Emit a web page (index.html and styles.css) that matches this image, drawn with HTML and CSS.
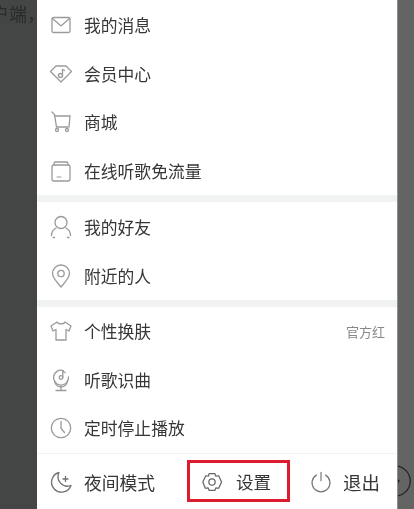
FILE: index.html
```html
<!DOCTYPE html>
<html lang="zh">
<head>
<meta charset="utf-8">
<title>菜单</title>
<link rel="stylesheet" href="styles.css">
</head>
<body>
<div class="screen">
  <div class="left-gutter"><span class="behind-text">户端，</span></div>
  <main class="panel">
    <section class="group group-first">
      <div class="row"><svg class="icon" viewBox="0 0 24 24"><rect x="3" y="4.500" width="18" height="15" rx="1.500"/><path d="M3.500 5.500 12 13l8.500-7.500"/></svg><span>我的消息</span></div>
      <div class="row"><svg class="icon" viewBox="0 0 24 24"><path d="M7 4h10L22.500 9.500 12 20 1.500 9.500z" stroke-linejoin="round"/><path d="M13.500 7.500v6"/><circle cx="11.500" cy="13.500" r="2"/><path d="M13.500 7.500l2 1"/></svg><span>会员中心</span></div>
      <div class="row"><svg class="icon" viewBox="0 0 24 24"><path d="M3 2l2.500 2.500 2 12.500h11.500"/><path d="M5.500 6H21l-1 11"/><circle cx="8" cy="20" r="1.500"/><circle cx="18" cy="20" r="1.500"/></svg><span>商城</span></div>
      <div class="row"><svg class="icon" viewBox="0 0 24 24"><rect x="3" y="6" width="18" height="16" rx="2"/><path d="M5 6V4.500Q5 3 6.500 3h11Q19 3 19 4.500V6"/><path class="fine" d="M8 18h4"/></svg><span>在线听歌免流量</span></div>
    </section>
    <section class="group group-mid">
      <div class="row"><svg class="icon" viewBox="0 0 24 24"><circle cx="12" cy="7.500" r="6"/><path d="M7 13C4 14.500 2.500 17 2.500 20.500"/><path d="M17 13c3 1.500 4.500 4 4.500 7.500"/><path d="M4 22.500h1.500M18.500 22.500H20"/></svg><span>我的好友</span></div>
      <div class="row"><svg class="icon" viewBox="0 0 24 24"><path d="M12 23C7 17.500 3.500 13.500 3.500 9.500a8.500 8.500 0 0 1 17 0C20.500 13.500 17 17.500 12 23z" stroke-linejoin="round"/><circle cx="12" cy="9.500" r="3.200"/></svg><span>附近的人</span></div>
    </section>
    <section class="group group-last">
      <div class="row"><svg class="icon" viewBox="0 0 24 24"><path d="M8 3 2 7l2 5 3-1.500V21h10V10.500l3 1.500 2-5-6-4c-1 2.500-7 2.500-8 0z" stroke-linejoin="round"/></svg><span>个性换肤</span><em class="row-note">官方红</em></div>
      <div class="row"><svg class="icon" viewBox="0 0 24 24"><path d="M14.500 2.500A7.500 7.500 0 1 0 19.500 9"/><path d="M5.500 12.500a6.500 6.500 0 0 0 13 0"/><circle cx="12" cy="9.500" r="1.800"/><path d="M13.800 9.500V3.500l2.500 1"/><path d="M12 19v2.500M7 22.500h10"/></svg><span>听歌识曲</span></div>
      <div class="row"><svg class="icon" viewBox="0 0 24 24"><circle cx="12" cy="12" r="9.700"/><path d="M12 5.500V12.500l3.500 4"/></svg><span>定时停止播放</span></div>
    </section>
    <footer class="footer">
      <div class="foot-item foot-night"><svg class="icon moon" viewBox="0 0 24 24"><path d="M10 2.500A10 10 0 1 0 22 15.500 9.500 9.500 0 0 1 10 2.500z" stroke-linejoin="round"/><path d="M16.500 6.500v5M14 9h5"/></svg><span>夜间模式</span></div>
      <div class="foot-item foot-settings"><svg class="icon gear" viewBox="0 0 24 24"><path d="M8.500 2h7l1.200 3 3.300-.5 3.500 7.500-3.500 7.500-3.300-.5-1.200 3h-7l-1.200-3-3.300.5L1 12l3.500-7.500 3.300.5z" stroke-linejoin="round"/><circle cx="12" cy="12" r="3.800"/></svg><span>设置</span></div>
      <div class="foot-item foot-exit"><svg class="icon power" viewBox="0 0 24 24"><path d="M7 4.500A9.800 9.800 0 1 0 17 4.500"/><path d="M12 1.500v9"/></svg><span>退出</span></div>
    </footer>
  </main>
  <div class="right-gutter">
    <svg class="peek" viewBox="0 0 17 36"><circle cx="-3" cy="18" r="16"/><path class="peek-arrow" d="M0 16l2 2-2 2z"/></svg>
  </div>
</div>
</body>
</html>
```

FILE: styles.css
```css
* { box-sizing: border-box; }
html, body { margin: 0; height: 100%; overflow: hidden; }
body { font-family: "Noto Sans CJK SC", "Liberation Sans", sans-serif; }

.screen {
  display: grid;
  grid-template-columns: 37px 360px 17px;
  width: 414px;
  height: 509px;
  overflow: hidden;
}

.left-gutter {
  background: #444545;
  display: flex;
  justify-content: flex-end;
  overflow: hidden;
  white-space: nowrap;
}
.behind-text {
  font-size: 18px;
  line-height: 18px;
  color: #2a2a2a;
  margin-top: 4px;
  margin-right: -8px;
  flex: none;
  filter: blur(0.5px);
}

.panel {
  background: #fff;
  display: flex;
  flex-direction: column;
  min-width: 0;
}

.group {
  display: flex;
  flex-direction: column;
  border-bottom: 7px solid #f1f3f3;
}
.group .row { flex: none; height: 48.500px; }
.group-first { height: 202px; padding-top: 1px; }
.group-mid { height: 105px; }
.group-mid .row { height: 49px; }
.group-last { height: 147px; border-bottom: 1px solid #f1f2f2; }

.row {
  display: flex;
  align-items: center;
  padding-left: 12px;
  padding-right: 12px;
  font-size: 16.800px;
  color: #363636;
}
.row span, .foot-item span { filter: blur(0.3px); }

.icon {
  width: 24px;
  height: 24px;
  flex: none;
  margin-right: 11px;
  fill: none;
  stroke: #9a9a9a;
  stroke-width: 1.300;
  stroke-linecap: round;
  overflow: visible;
}
.fine { stroke-width: 1; }
.moon { stroke: #707070; }

.row-note {
  margin-left: auto;
  font-style: normal;
  font-size: 13px;
  color: #888;
  filter: blur(0.3px);
}

.footer {
  display: flex;
  flex: 1;
  align-items: center;
  min-height: 0;
  color: #363636;
}
.foot-item {
  display: flex;
  align-items: center;
}
.foot-night {
  width: 150px;
  padding-left: 12px;
  font-size: 17.800px;
  margin-top: 1px;
}
.foot-settings {
  width: 103px;
  height: 42px;
  border: 3px solid #dc1c2e;
  padding-left: 12px;
  padding-top: 2px;
  font-size: 17.500px;
  margin-top: -2px;
}
.gear {
  width: 20px;
  height: 20px;
  margin-right: 14px;
  stroke: #666;
  stroke-width: 1.500;
}
.foot-exit {
  padding-left: 20px;
  font-size: 18.500px;
  margin-top: 1px;
}
.power {
  width: 22px;
  height: 22px;
  margin-right: 11px;
  stroke: #777;
}

.right-gutter {
  background: #636564;
  display: flex;
  align-items: flex-end;
  padding-bottom: 10px;
  border-left: 1px solid #8e8f8f;
}
.peek {
  width: 16px;
  height: 36px;
  flex: none;
  fill: none;
  stroke: #222;
  stroke-width: 1.300;
}
.peek-arrow { fill: #222; stroke: none; }
```
